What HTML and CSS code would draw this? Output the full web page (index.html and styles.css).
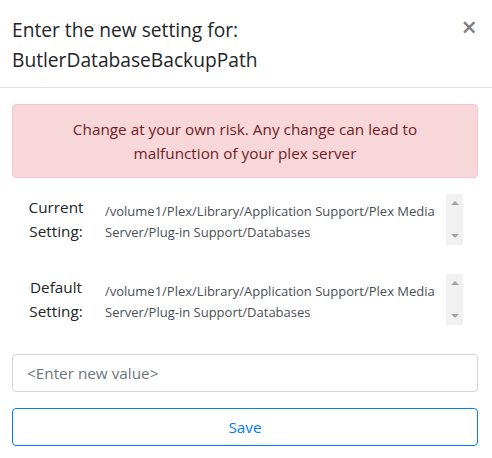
FILE: index.html
```html
<!DOCTYPE html>
<html lang="en">
<head>
<meta charset="utf-8">
<title>Enter the new setting</title>
<link rel="stylesheet" href="styles.css">
</head>
<body>
<div class="modal">
  <div class="modal-header">
    <h5 class="modal-title">Enter the new setting for: ButlerDatabaseBackupPath</h5>
    <button class="close" type="button" aria-label="Close">×</button>
  </div>
  <div class="modal-body">
    <div class="alert">Change at your own risk. Any change can lead to malfunction of your plex server</div>
    <div class="setting-row">
      <div class="setting-label">Current Setting:</div>
      <div class="setting-value">
        <div class="value-text">/volume1/Plex/Library/Application Support/Plex Media<br>Server/Plug-in Support/Databases</div>
        <div class="scrollbar"><span class="arrow up"></span><span class="arrow down"></span></div>
      </div>
    </div>
    <div class="setting-row">
      <div class="setting-label">Default Setting:</div>
      <div class="setting-value">
        <div class="value-text">/volume1/Plex/Library/Application Support/Plex Media<br>Server/Plug-in Support/Databases</div>
        <div class="scrollbar"><span class="arrow up"></span><span class="arrow down"></span></div>
      </div>
    </div>
    <input class="form-control" type="text" placeholder="<Enter new value>">
    <button class="btn-outline" type="button">Save</button>
  </div>
</div>
</body>
</html>
```
FILE: styles.css
```css
* { box-sizing: border-box; }
html, body { margin: 0; padding: 0; background: #fff; }
body {
  font-family: "Open Sans", "Noto Sans", "Liberation Sans", sans-serif;
  font-size: 15.3px;
  line-height: 1.5;
  color: #212529;
}
.modal { width: 492px; }
.modal-header {
  display: flex;
  align-items: flex-start;
  justify-content: space-between;
  padding: 15px 12px 12px 12px;
  border-bottom: 1px solid #dee2e6;
}
.modal-title {
  margin: 0;
  width: 300px;
  font-size: 19.2px;
  font-weight: 500;
  line-height: 30px;
}
.close {
  background: none;
  border: 0;
  padding: 0;
  margin: 0 3px 0 0;
  font-family: inherit;
  font-size: 27px;
  font-weight: 600;
  line-height: 24px;
  color: #000;
  opacity: .5;
}
.modal-body { padding: 16px 14px 12px 12px; }
.alert {
  padding: 12px 20px;
  background: #f8d7da;
  border: 1px solid #f5c6cb;
  border-radius: 4px;
  color: #721c24;
  text-align: center;
  line-height: 24px;
  margin-bottom: 16px;
}
.setting-row {
  display: flex;
  align-items: flex-start;
  margin-bottom: 29px;
}
.setting-label {
  width: 88px;
  text-align: center;
  padding-top: 1px;
  line-height: 24px;
}
.setting-value {
  display: flex;
  width: 363px;
  height: 51px;
}
.value-text {
  flex: 1;
  padding: 7px 5px 0;
  font-size: 13px;
  line-height: 21px;
  color: #495057;
  white-space: nowrap;
  overflow: hidden;
}
.scrollbar {
  width: 17px;
  background: #f1f1f1;
  display: flex;
  flex-direction: column;
  justify-content: space-between;
  align-items: center;
  padding: 7px 0;
}
.arrow {
  width: 0;
  height: 0;
  border-left: 4px solid transparent;
  border-right: 4px solid transparent;
}
.arrow.up { border-bottom: 4px solid #a3a3a3; }
.arrow.down { border-top: 4px solid #a3a3a3; }
.form-control {
  display: block;
  width: 466px;
  height: 38px;
  margin-top: 2px;
  padding: 6px 14px;
  font-family: inherit;
  font-size: 15.3px;
  line-height: 24px;
  color: #495057;
  border: 1px solid #ced4da;
  border-radius: 4px;
}
.form-control::placeholder { color: #6c757d; }
.btn-outline {
  display: block;
  width: 466px;
  height: 38px;
  margin-top: 16px;
  padding: 6px 12px;
  background: #fff;
  border: 1px solid #007bff;
  border-radius: 4px;
  color: #007bff;
  font-family: inherit;
  font-size: 15.3px;
  line-height: 24px;
}
```
